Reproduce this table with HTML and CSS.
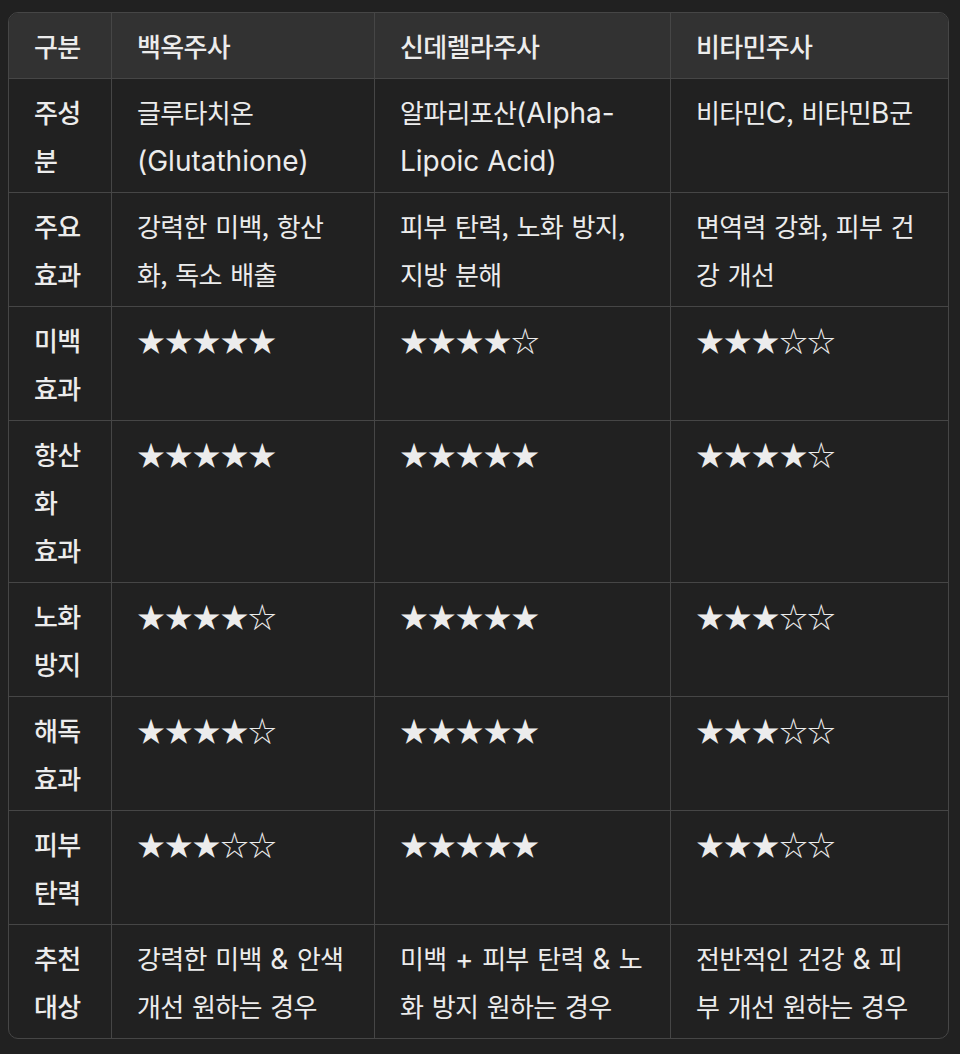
FILE: index.html
```html
<!DOCTYPE html>
<html lang="ko">
<head>
<meta charset="utf-8">
<link rel="stylesheet" href="styles.css">
</head>
<body>
<div class="wrap">
<table class="cmp">
  <colgroup>
    <col class="c1"><col class="c2"><col class="c3"><col class="c4">
  </colgroup>
  <thead>
    <tr><th>구분</th><th>백옥주사</th><th>신데렐라주사</th><th>비타민주사</th></tr>
  </thead>
  <tbody>
    <tr><td class="lbl">주성분</td><td>글루타치온 <span class="en">(Glutathione)</span></td><td>알파리포산<span class="en">(Alpha-Lipoic Acid)</span></td><td>비타민<span class="en">C</span>, 비타민<span class="en">B</span>군</td></tr>
    <tr><td class="lbl">주요 효과</td><td>강력한 미백, 항산화, 독소 배출</td><td>피부 탄력, 노화 방지, 지방 분해</td><td>면역력 강화, 피부 건강 개선</td></tr>
    <tr><td class="lbl">미백 효과</td><td class="st">★★★★★</td><td class="st">★★★★☆</td><td class="st">★★★☆☆</td></tr>
    <tr><td class="lbl">항산화 효과</td><td class="st">★★★★★</td><td class="st">★★★★★</td><td class="st">★★★★☆</td></tr>
    <tr><td class="lbl">노화 방지</td><td class="st">★★★★☆</td><td class="st">★★★★★</td><td class="st">★★★☆☆</td></tr>
    <tr><td class="lbl">해독 효과</td><td class="st">★★★★☆</td><td class="st">★★★★★</td><td class="st">★★★☆☆</td></tr>
    <tr><td class="lbl">피부 탄력</td><td class="st">★★★☆☆</td><td class="st">★★★★★</td><td class="st">★★★☆☆</td></tr>
    <tr><td class="lbl">추천 대상</td><td>강력한 미백 <span class="en">&amp;</span> 안색 개선 원하는 경우</td><td>미백 <span class="en">+</span> 피부 탄력 <span class="en">&amp;</span> 노화 방지 원하는 경우</td><td>전반적인 건강 <span class="en">&amp;</span> 피부 개선 원하는 경우</td></tr>
  </tbody>
</table>
</div>
</body>
</html>
```
FILE: styles.css
```css
html, body {
  margin: 0;
  padding: 0;
  background: #212121;
}
.wrap {
  padding: 12px 13px 0 8px;
}
.cmp {
  width: 939px;
  table-layout: fixed;
  border-collapse: separate;
  border-spacing: 0;
  border: 1px solid #464646;
  border-radius: 10px;
  overflow: hidden;
  font-family: "Noto Sans CJK KR", sans-serif;
  font-size: 26px;
  letter-spacing: -0.7px;
  word-spacing: 2px;
  line-height: 48px;
  color: #ececec;
}
.c1 { width: 103px; }
.c2 { width: 263px; }
.c3 { width: 296px; }
.c4 { width: 277px; }
.cmp th, .cmp td {
  text-align: left;
  vertical-align: top;
  padding: 9px 25px 8px 25px;
  border-right: 1px solid #464646;
  border-bottom: 1px solid #464646;
}
.cmp th:last-child, .cmp td:last-child { border-right: 0; }
.cmp tbody tr:last-child td { border-bottom: 0; }
.cmp th {
  background: #323232;
  font-weight: 500;
}
.cmp .lbl { font-weight: 500; }
.en {
  font-family: Inter, "Noto Sans CJK KR", sans-serif;
  font-size: 28px;
  line-height: 1;
  letter-spacing: 0;
  word-spacing: 0;
}
.cmp .st {
  font-size: 28px;
  letter-spacing: -0.2px;
}
```
